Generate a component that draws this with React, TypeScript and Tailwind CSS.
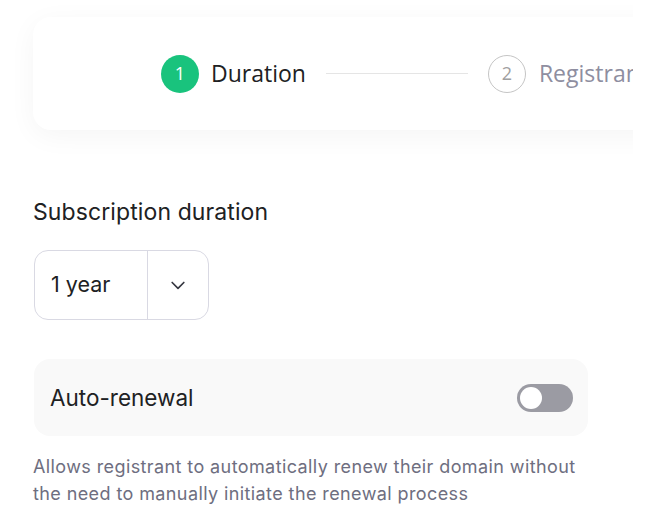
import React from "react";

export default function App() {
  return (
    <div className="w-[654px] h-[525px] bg-white overflow-hidden" style={{ fontFamily: "Inter, 'Noto Sans', sans-serif" }}>
      <div className="w-[633px] h-[525px] overflow-hidden pt-[17px]">
        <div className="ml-[33px] w-[720px] h-[113px] bg-white rounded-[18px] shadow-[0_6px_28px_rgba(0,0,0,0.045)] flex items-center pl-[128px]">
          <div className="flex items-center">
            <div className="w-[38px] h-[38px] rounded-full bg-[#19c37d] text-white flex items-center justify-center text-[18px]" style={{ fontFamily: "'Open Sans', sans-serif" }}>1</div>
            <span className="ml-[12px] text-[23px] text-[#202123]" style={{ fontFamily: "'Open Sans', sans-serif" }}>Duration</span>
            <div className="ml-[20px] w-[142px] h-px bg-[#e5e5e5]"></div>
            <div className="ml-[20px] w-[38px] h-[38px] rounded-full border-[1.5px] border-[#c5c5c5] text-[#a0a0a0] flex items-center justify-center text-[18px]" style={{ fontFamily: "'Open Sans', sans-serif" }}>2</div>
            <span className="ml-[13px] text-[23px] text-[#8e8ea0]" style={{ fontFamily: "'Open Sans', sans-serif" }}>Registrant</span>
          </div>
        </div>

        <div className="pl-[33px] pt-[68px]">
          <div className="text-[23px] leading-[28px] text-[#202123] tracking-[0.1px]">Subscription duration</div>
          <div className="mt-[24px] ml-px w-[175px] h-[70px] border border-[#d9d9e3] rounded-[14px] flex items-stretch">
            <div className="w-[112px] flex items-center pl-[16px] pb-[2px] text-[21.5px] text-[#202123]">1 year</div>
            <div className="w-px bg-[#d9d9e3]"></div>
            <div className="flex-1 flex items-center justify-center">
              <svg width="20" height="20" viewBox="0 0 24 24" fill="none" stroke="#353740" strokeWidth="2" strokeLinecap="round" strokeLinejoin="round">
                <path d="M5 9l7 7 7-7" />
              </svg>
            </div>
          </div>

          <div className="mt-[39px] ml-px w-[554px] h-[77px] bg-[#f9f9f9] rounded-[16px] flex items-center justify-between pl-[16px] pr-[15px]">
            <span className="text-[22.5px] text-[#202123]">Auto-renewal</span>
            <div className="w-[56px] h-[28px] rounded-full bg-[#9b9ba3] p-[3px] flex items-center">
              <div className="w-[22px] h-[22px] rounded-full bg-white"></div>
            </div>
          </div>

          <p className="mt-[17px] text-[18px] leading-[27px] text-[#6e6e80] tracking-[0.4px] w-[562px]">
            Allows registrant to automatically renew their domain without the need to manually initiate the renewal process
          </p>
        </div>
      </div>
    </div>
  );
}
